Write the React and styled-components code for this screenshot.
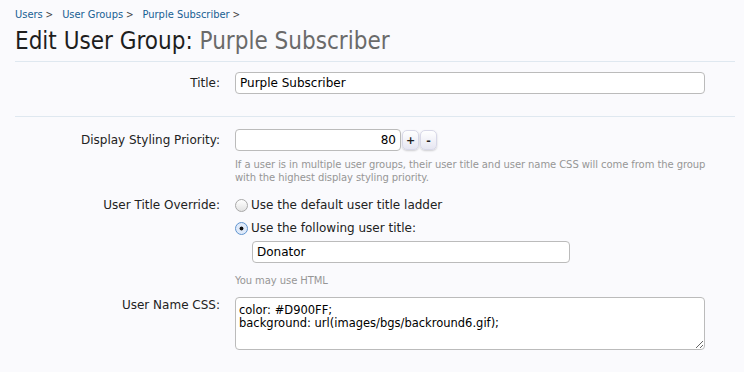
import React from "react";
import styled, { createGlobalStyle } from "styled-components";

const Global = createGlobalStyle`
  html, body { margin: 0; padding: 0; background: #fafafd; }
  body { font-family: "DejaVu Sans", Tahoma, sans-serif; color: #222; }
  * { box-sizing: border-box; }
`;

const Page = styled.div`
  width: 744px;
  height: 372px;
  padding: 7px 9px 0 15px;
  overflow: hidden;
`;

const Breadcrumb = styled.div`
  display: flex;
  gap: 9px;
  font-family: "DejaVu Sans Condensed", "DejaVu Sans", sans-serif;
  font-size: 11px;
  line-height: 16px;
`;

const Crumb = styled.a`
  color: #176093;
  text-decoration: none;
  &::after { content: " >"; color: #444; font-size: 10px; }
`;

const Heading = styled.h1`
  margin: 3px 0 0;
  font-family: "DejaVu Sans Condensed", "DejaVu Sans", sans-serif;
  font-size: 24px;
  font-weight: normal;
  line-height: 30px;
  color: #1e1e1e;
  padding-bottom: 5px;
  border-bottom: 1px solid #dfe8f0;
`;

const Sub = styled.span`
  color: #6a6a6a;
`;

const Section = styled.div`
  padding: ${(p) => p.pad};
  border-bottom: ${(p) => (p.last ? "none" : "1px solid #dfe8f0")};
  display: flex;
  flex-direction: column;
  gap: ${(p) => p.gap || 0}px;
`;

const Row = styled.div`
  display: grid;
  grid-template-columns: 205px 1fr;
  column-gap: 15px;
  align-items: start;
`;

const Label = styled.div`
  text-align: right;
  font-size: 12px;
  line-height: ${(p) => p.lh || 22}px;
  color: #222;
`;

const Field = styled.div`
  display: flex;
  flex-direction: column;
`;

const TextInput = styled.input`
  width: ${(p) => p.w}px;
  height: 22px;
  border: 1px solid #bbb;
  border-radius: 4px;
  background: #fff;
  font-family: "DejaVu Sans", sans-serif;
  font-size: 12px;
  padding: 0 4px;
  color: #000;
  text-align: ${(p) => p.align || "left"};
  margin-left: ${(p) => p.indent || 0}px;
  margin-top: ${(p) => p.mt || 0}px;
  outline: none;
`;

const Spin = styled.div`
  display: flex;
  align-items: center;
  gap: 1px;
`;

const SpinBtn = styled.button`
  width: 17px;
  height: 20px;
  border: 1px solid #d8d8e8;
  border-radius: 5px;
  background: linear-gradient(#ffffff, #e6e6f2);
  box-shadow: 0 1px 2px rgba(0, 0, 0, 0.18);
  font-family: "DejaVu Sans", sans-serif;
  font-size: 11px;
  font-weight: bold;
  padding: 0;
  color: #222;
`;

const Hint = styled.div`
  font-size: 10px;
  line-height: 13px;
  letter-spacing: -0.08px;
  color: #969696;
  margin-top: ${(p) => p.mt || 0}px;
`;

const RadioLine = styled.label`
  display: flex;
  align-items: center;
  gap: 3px;
  font-size: 12px;
  line-height: 23px;
  color: #222;
`;

const Radio = styled.span`
  width: 13px;
  height: 13px;
  border-radius: 50%;
  border: 1px solid ${(p) => (p.on ? "#5f94cf" : "#a8a8a8")};
  background: ${(p) =>
    p.on
      ? "radial-gradient(circle, #111 0 1.6px, #dfeafa 2.3px)"
      : "linear-gradient(#fff, #e2e2e2)"};
  display: inline-block;
`;

const TextArea = styled.textarea`
  width: 470px;
  height: 53px;
  border: 1px solid #bbb;
  border-radius: 4px;
  background: #fff;
  font-family: "DejaVu Sans", sans-serif;
  font-size: 11.5px;
  line-height: 13px;
  padding: 6px 3px;
  color: #000;
  resize: vertical;
  outline: none;
`;

export default function App() {
  return (
    <Page>
      <Global />
      <Breadcrumb>
        <Crumb href="#">Users</Crumb>
        <Crumb href="#">User Groups</Crumb>
        <Crumb href="#">Purple Subscriber</Crumb>
      </Breadcrumb>
      <Heading>
        Edit User Group: <Sub>Purple Subscriber</Sub>
      </Heading>
      <Section pad="10px 0 22px">
        <Row>
          <Label>Title:</Label>
          <TextInput w={470} defaultValue="Purple Subscriber" />
        </Row>
      </Section>
      <Section pad="12px 0 0" gap={10} last>
        <Row>
          <Label>Display Styling Priority:</Label>
          <Field>
            <Spin>
              <TextInput w={166} align="right" defaultValue="80" />
              <SpinBtn>+</SpinBtn>
              <SpinBtn>-</SpinBtn>
            </Spin>
            <Hint mt={7}>
              If a user is in multiple user groups, their user title and user name CSS will come from the group
              <br />
              with the highest display styling priority.
            </Hint>
          </Field>
        </Row>
        <Row>
          <Label lh={23}>User Title Override:</Label>
          <Field>
            <RadioLine>
              <Radio />
              Use the default user title ladder
            </RadioLine>
            <RadioLine>
              <Radio on />
              Use the following user title:
            </RadioLine>
            <TextInput w={318} indent={17} mt={1} defaultValue="Donator" />
            <Hint mt={11}>You may use HTML</Hint>
          </Field>
        </Row>
        <Row>
          <Label lh={17}>User Name CSS:</Label>
          <TextArea
            defaultValue={"color: #D900FF;\nbackground: url(images/bgs/backround6.gif);"}
          />
        </Row>
      </Section>
    </Page>
  );
}
